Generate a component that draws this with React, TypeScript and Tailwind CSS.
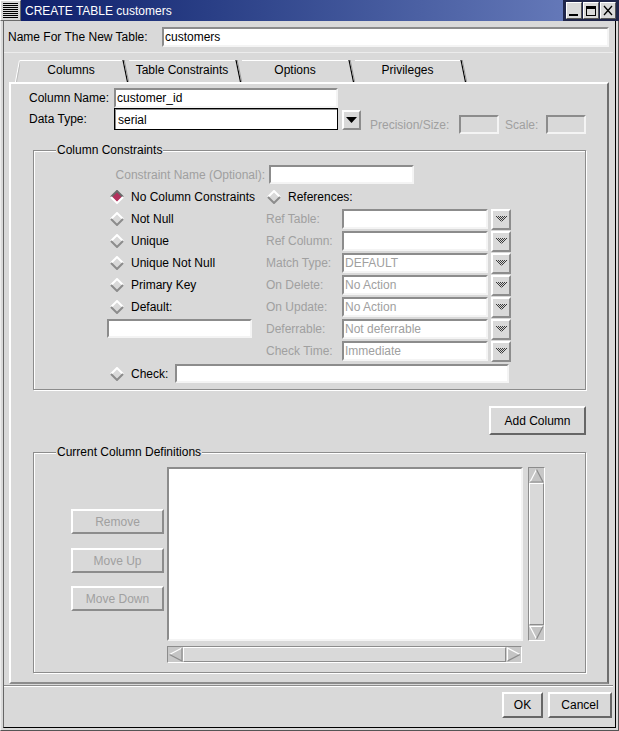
import React from 'react';

const raised = 'border-2 border-t-white border-l-white border-r-[#8c8c8c] border-b-[#8c8c8c]';
const sunken = 'border-2 border-t-[#8c8c8c] border-l-[#8c8c8c] border-r-[#f4f4f4] border-b-[#f4f4f4]';
const muted = 'text-[#a0a0a0]';

function Field({ className = '', value = '', dim = false }: { className?: string; value?: string; dim?: boolean }) {
  return (
    <div
      className={`${sunken} bg-white flex items-center px-[1px] overflow-hidden whitespace-nowrap shrink-0 ${
        dim ? muted : 'text-black'
      } ${className}`}
    >
      {value}
    </div>
  );
}

function Radio({ on = false }: { on?: boolean }) {
  return (
    <svg width="14" height="14" viewBox="0 0 14 14" className="shrink-0">
      <polygon points="7,1 13,7 7,13 1,7" fill={on ? '#b3305c' : '#d9d9d9'} />
      <polyline points="1,7 7,1 13,7" fill="none" stroke={on ? '#6a6a6a' : '#ffffff'} strokeWidth="2" />
      <polyline points="1,7 7,13 13,7" fill="none" stroke={on ? '#ffffff' : '#8c8c8c'} strokeWidth="2" />
    </svg>
  );
}

// stippled down arrow, the disabled look
const stipple: [number, number][] = [];
for (let r = 0; r < 5; r++) {
  for (let x = r; x <= 10 - r; x++) {
    if ((x + r) % 2 === 0) stipple.push([x, r]);
  }
}

function DropBtn() {
  return (
    <div className={`${raised} ml-[3px] w-[20px] h-[21px] flex items-center justify-center shrink-0`}>
      <svg width="11" height="6" viewBox="0 0 11 6" shapeRendering="crispEdges">
        {stipple.map(([x, y]) => (
          <rect key={`${x}-${y}`} x={x} y={y} width="1" height="1" fill="#3a3a3a" />
        ))}
        <rect x="5" y="5" width="1" height="1" fill="#8c8c8c" />
      </svg>
    </div>
  );
}

function Btn({ children, className = '', disabled = false }: { children: React.ReactNode; className?: string; disabled?: boolean }) {
  return (
    <div
      className={`${raised} flex items-center justify-center shrink-0 ${disabled ? muted : 'text-black'} ${className}`}
    >
      {children}
    </div>
  );
}

function Arrow({ dir }: { dir: 'up' | 'down' | 'left' | 'right' }) {
  const pts = {
    up: { poly: '7.5,1.5 14,14 1,14', light: 'M1 14 L7.5 1.5', dark: 'M7.5 1.5 L14 14 L1 14' },
    down: { poly: '1,1.5 14,1.5 7.5,14', light: 'M7.5 14 L1 1.5 L14 1.5', dark: 'M14 1.5 L7.5 14' },
    left: { poly: '1.5,7.5 14,1 14,14', light: 'M14 1 L1.5 7.5', dark: 'M1.5 7.5 L14 14 L14 1' },
    right: { poly: '1.5,1 14,7.5 1.5,14', light: 'M1.5 14 L1.5 1 L14 7.5', dark: 'M14 7.5 L1.5 14' },
  }[dir];
  return (
    <svg width="15" height="15" viewBox="0 0 15 15" className="shrink-0">
      <polygon points={pts.poly} fill="#c4c4c4" />
      <path d={pts.light} fill="none" stroke="#ffffff" strokeWidth="1.2" />
      <path d={pts.dark} fill="none" stroke="#8c8c8c" strokeWidth="1.2" />
    </svg>
  );
}

function VScroll() {
  return (
    <div className="ml-[5px] w-[17px] h-[174px] border border-t-[#8c8c8c] border-l-[#8c8c8c] border-r-white border-b-white bg-[#c8c8c8] flex flex-col shrink-0">
      <Arrow dir="up" />
      <div className="flex-1 border border-t-white border-l-white border-r-[#8c8c8c] border-b-[#8c8c8c] bg-[#d9d9d9]" />
      <Arrow dir="down" />
    </div>
  );
}

function HScroll() {
  return (
    <div className="mt-[5px] w-[355px] h-[17px] border border-t-[#8c8c8c] border-l-[#8c8c8c] border-r-white border-b-white bg-[#c8c8c8] flex">
      <Arrow dir="left" />
      <div className="flex-1 border border-t-white border-l-white border-r-[#8c8c8c] border-b-[#8c8c8c] bg-[#d9d9d9]" />
      <Arrow dir="right" />
    </div>
  );
}

function Slash() {
  return (
    <svg width="7" height="24" viewBox="0 0 7 24" className="shrink-0">
      <line x1="1" y1="2" x2="5.5" y2="24" stroke="#000" strokeWidth="1.2" />
      <line x1="2.2" y1="2" x2="6.7" y2="24" stroke="#9a9a9a" strokeWidth="1" />
    </svg>
  );
}

function Tab({ label, className = '' }: { label: string; className?: string }) {
  return (
    <div className={`h-[24px] pt-[2px] shrink-0 ${className}`}>
      <div className="h-[22px] pb-[3px] border-t border-t-white flex items-center justify-center">{label}</div>
    </div>
  );
}

function TitleBar() {
  return (
    <div className="flex h-[21px] shrink-0">
      <div className="w-[21px] h-[21px] bg-[#d9d9d9] border border-t-white border-l-white border-r-[#6a6a6a] border-b-[#6a6a6a]">
        <svg width="19" height="19" viewBox="0 0 19 19">
          {[2, 4, 6, 8, 10, 12, 14, 16].map((y) => (
            <line key={y} x1="2" y1={y + 0.5} x2="17" y2={y + 0.5} stroke="#000" />
          ))}
        </svg>
      </div>
      <div className="flex-1 bg-linear-to-r from-[#0f1f6b] to-[#6478b8] flex items-center pl-[4px] text-white text-[12px]">
        CREATE TABLE customers
      </div>
      <div className="w-[56px] bg-[#20264a] flex items-center gap-[1px] pl-[3px]">
        <div className="w-[16px] h-[17px] bg-[#d9d9d9] border border-t-white border-l-white border-r-[#555] border-b-[#555] flex items-end pl-[2px] pb-[2px]">
          <div className="w-[9px] h-[2px] bg-black" />
        </div>
        <div className="w-[16px] h-[17px] bg-[#d9d9d9] border border-t-white border-l-white border-r-[#555] border-b-[#555] flex items-center justify-center">
          <div className="w-[10px] h-[10px] border border-black border-t-[3px]" />
        </div>
        <div className="w-[16px] h-[17px] bg-[#d9d9d9] border border-t-white border-l-white border-r-[#555] border-b-[#555] flex items-center justify-center">
          <svg width="10" height="11" viewBox="0 0 10 11">
            <path d="M1 1 L9 10 M9 1 L1 10" stroke="#000" strokeWidth="1.3" fill="none" />
          </svg>
        </div>
      </div>
    </div>
  );
}

const leftOptions = ['No Column Constraints', 'Not Null', 'Unique', 'Unique Not Null', 'Primary Key', 'Default:'];

const refRows = [
  { label: 'Ref Table:', value: '' },
  { label: 'Ref Column:', value: '' },
  { label: 'Match Type:', value: 'DEFAULT' },
  { label: 'On Delete:', value: 'No Action' },
  { label: 'On Update:', value: 'No Action' },
  { label: 'Deferrable:', value: 'Not deferrable' },
  { label: 'Check Time:', value: 'Immediate' },
];

function GroupBox({ title, className = '', children }: { title: string; className?: string; children: React.ReactNode }) {
  return (
    <div
      className={`relative ml-[22px] w-[553px] border border-[#8c8c8c] shadow-[inset_1px_1px_0_#ffffff,1px_1px_0_#ffffff] shrink-0 ${className}`}
    >
      <span className="absolute left-[22px] -top-[8px] bg-[#d9d9d9] px-[1px] leading-[14px]">{title}</span>
      {children}
    </div>
  );
}

export default function App() {
  return (
    <div className="w-[619px] h-[731px] bg-[#d9d9d9] font-['Liberation_Sans',Arial,sans-serif] text-[12px] leading-[14px] text-black flex flex-col overflow-hidden">
      <TitleBar />
      <div className="flex-1 flex flex-col border-l border-l-[#eeeeee] border-r border-r-[#555] border-b border-b-[#555] pl-[2px] pr-[2px] pb-[2px]">
        <div className="flex-1 flex flex-col border-l border-l-[#666] border-r border-r-black border-b border-b-black pr-[2px] pb-[2px]">
          {/* table name */}
          <div className="mt-[6px] h-[20px] flex items-center">
            <span className="pl-[4px] w-[158px]">Name For The New Table:</span>
            <Field className="w-[447px] h-[20px]" value="customers" />
          </div>
          <div className="mt-[5px] h-[1px] bg-[#ececec]" />

          {/* tabs */}
          <div className="mt-[5px] h-[24px] flex">
            <svg width="16" height="24" viewBox="0 0 16 24" className="shrink-0">
              <line x1="11.5" y1="24" x2="15.5" y2="2.5" stroke="#ffffff" strokeWidth="1.2" />
              <line x1="12.5" y1="24" x2="16.5" y2="2.5" stroke="#bcbcbc" strokeWidth="1" />
            </svg>
            <Tab label="Columns" className="w-[102px]" />
            <Slash />
            <Tab label="Table Constraints" className="w-[106px]" />
            <Slash />
            <Tab label="Options" className="w-[106px]" />
            <Slash />
            <Tab label="Privileges" className="w-[105px]" />
            <Slash />
          </div>

          {/* tab panel */}
          <div className="ml-[5px] w-[600px] h-[602px] border-2 border-t-white border-l-white border-r-[#6e6e6e] border-b-[#8c8c8c] flex flex-col">
            <div className="mt-[4px] h-[20px] flex items-center">
              <span className="ml-[18px] w-[85px] shrink-0">Column Name:</span>
              <Field className="w-[224px] h-[20px]" value="customer_id" />
            </div>
            <div className="h-[26px] flex items-start">
              <span className="ml-[18px] w-[85px] h-[22px] flex items-center shrink-0">Data Type:</span>
              <div className="w-[224px] h-[22px] border border-black shrink-0">
                <div className="h-full border-t border-l border-t-[#8c8c8c] border-l-[#8c8c8c] bg-white flex items-center px-[2px]">
                  serial
                </div>
              </div>
              <div className={`${raised} ml-[4px] mt-[2px] w-[19px] h-[20px] flex items-center justify-center shrink-0`}>
                <svg width="11" height="6" viewBox="0 0 11 6">
                  <polygon points="0,0 11,0 5.5,6" fill="#000" />
                </svg>
              </div>
              <span className={`ml-[9px] mt-[7px] w-[89px] h-[19px] flex items-center shrink-0 ${muted}`}>Precision/Size:</span>
              <div className={`${sunken} mt-[7px] w-[40px] h-[19px] shrink-0`} />
              <span className={`ml-[6px] mt-[7px] w-[41px] h-[19px] flex items-center shrink-0 ${muted}`}>Scale:</span>
              <div className={`${sunken} mt-[7px] w-[40px] h-[19px] shrink-0`} />
            </div>

            <GroupBox title="Column Constraints" className="mt-[16px] h-[240px]">
              <div className="mt-[14px] h-[19px] flex items-center">
                <span className={`w-[231px] text-right shrink-0 ${muted}`}>Constraint Name (Optional):</span>
                <Field className="ml-[4px] w-[145px] h-[19px]" />
              </div>
              <div className="mt-[2px] flex">
                <div className="ml-[73px] w-[159px] flex flex-col shrink-0">
                  {leftOptions.map((o, i) => (
                    <div key={o} className="h-[22px] flex items-center pl-[3px] gap-[7px]">
                      <Radio on={i === 0} />
                      <span>{o}</span>
                    </div>
                  ))}
                  <Field className="mt-[1px] w-[145px] h-[19px]" />
                </div>
                <div className="w-[245px] flex flex-col shrink-0">
                  <div className="h-[22px] flex items-center pl-[1px] gap-[7px]">
                    <Radio />
                    <span>References:</span>
                  </div>
                  {refRows.map((r) => (
                    <div key={r.label} className="h-[22px] flex items-center">
                      <span className={`w-[76px] shrink-0 ${muted}`}>{r.label}</span>
                      <Field className="w-[146px] h-[20px]" value={r.value} dim />
                      <DropBtn />
                    </div>
                  ))}
                </div>
              </div>
              <div className="mt-[2px] h-[19px] flex items-center">
                <div className="ml-[76px]">
                  <Radio />
                </div>
                <span className="ml-[7px] w-[44px] shrink-0">Check:</span>
                <Field className="w-[334px] h-[19px]" />
              </div>
            </GroupBox>

            <Btn className="mt-[16px] ml-[478px] w-[97px] h-[29px] border-r-[#666] border-b-[#666]">Add Column</Btn>

            <GroupBox title="Current Column Definitions" className="mt-[17px] h-[221px]">
              <div className="mt-[14px] flex items-start">
                <div className="ml-[37px] mt-[42px] w-[93px] flex flex-col shrink-0">
                  <Btn disabled className="h-[25px]">Remove</Btn>
                  <Btn disabled className="mt-[14px] h-[25px]">Move Up</Btn>
                  <Btn disabled className="mt-[13px] h-[25px]">Move Down</Btn>
                </div>
                <div className="ml-[3px] flex flex-col shrink-0">
                  <div className={`${sunken} w-[356px] h-[174px] bg-white`} />
                  <HScroll />
                </div>
                <VScroll />
              </div>
            </GroupBox>
          </div>

          <div className="mt-[1px] h-[2px] border-t border-t-[#8c8c8c] border-b border-b-white" />

          <div className="mt-[5px] flex justify-end gap-[5px] pr-[1px]">
            <Btn className="w-[41px] h-[26px] border-r-[#666] border-b-[#666]">OK</Btn>
            <Btn className="w-[64px] h-[26px] border-r-[#666] border-b-[#666]">Cancel</Btn>
          </div>
        </div>
      </div>
    </div>
  );
}
